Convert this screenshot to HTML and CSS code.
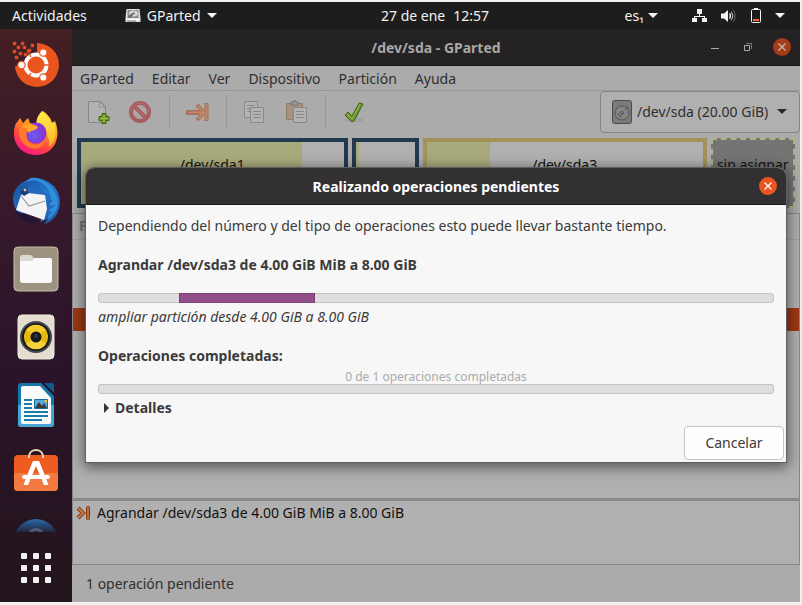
FILE: index.html
```html
<!DOCTYPE html>
<html lang="es">
<head>
<meta charset="utf-8">
<title>GParted</title>
<link rel="stylesheet" href="styles.css">
</head>
<body>
<header class="topbar">
  <div class="topbar-side">
    <button class="top-item">Actividades</button>
    <button class="top-item app-menu">
      <svg width="16" height="16" viewBox="0 0 16 16"><path d="M1.500 1h13l1 9v4h-15v-4z" fill="#e2e2e2"/><path d="M2.500 2h11v8h-11z" fill="#8c8c8c"/><ellipse cx="8.500" cy="5.500" rx="4.500" ry="3" fill="#d4d4d4"/><path d="M3 9l4-4 2 1-4 4z" fill="#666"/><circle cx="9" cy="5.300" r="1" fill="#777"/><path d="M1 11h14v1H1z" fill="#fff"/><path d="M2 12.500h9v1H2z" fill="#777"/></svg>
      GParted
      <svg width="10" height="6" viewBox="0 0 10 6"><path d="M0 0h10L5 5z" fill="#f2f2f2"/></svg>
    </button>
  </div>
  <button class="top-item clock"><span>27 de ene</span><span>12:57</span></button>
  <div class="topbar-side status-area">
    <button class="top-item lang"><span>es₁</span>
      <svg width="10" height="6" viewBox="0 0 10 6"><path d="M0 0h10L5 5z" fill="#f2f2f2"/></svg>
    </button>
    <button class="top-item system" aria-label="Sistema">
      <svg width="15" height="14" viewBox="0 0 15 14"><path d="M5 0h5v5H8v2h5v2h2v4h-5V9h2V8H3v1h2v4H0V9h2V7h5V5H5z" fill="#f2f2f2"/></svg>
      <svg width="16" height="14" viewBox="0 0 16 14"><path d="M0 4.500h3L7 1v12L3 9.500H0z" fill="#f2f2f2"/><path d="M8.500 4.500q2 2.500 0 5" fill="none" stroke="#f2f2f2" stroke-width="1.300"/><path d="M10 2.800q3.500 4.200 0 8.400" fill="none" stroke="#aaa" stroke-width="1.200"/><path d="M12 1q4.500 6 0 12" fill="none" stroke="#555" stroke-width="1.200"/></svg>
      <svg width="10" height="16" viewBox="0 0 10 16"><path d="M3 0h4v1H3z" fill="#f2f2f2"/><rect x=".5" y="1.500" width="9" height="13" rx="1" fill="none" stroke="#f2f2f2"/><path d="M2 11h6v2H2z" fill="#ef6b33"/></svg>
      <svg width="10" height="6" viewBox="0 0 10 6"><path d="M0 0h10L5 5z" fill="#f2f2f2"/></svg>
    </button>
  </div>
</header>

<div class="desktop">
  <nav class="dock" aria-label="Aplicaciones">
    <div class="dock-apps">
      <button aria-label="Instalar Ubuntu"><svg viewBox="0 0 48 48"><path d="M25 2a22 22 0 1 1-22 23h5v-4h5v-4h6v-5h6z" fill="#e9541f"/><g fill="#e9541f" stroke="#b8421d" stroke-width=".6"><path d="M1 1h3v3H1zM9 1h3v3H9zM5 5h3v3H5zM11 5h3v3h-3zM19 3h3v3h-3zM1 9h3v3H1zM7 11h3v3H7zM12 12h3v3h-3zM3 15h3v3H3zM16 8h3v3h-3z"/></g><circle cx="24" cy="24" r="10.500" fill="none" stroke="#fff" stroke-width="4"/><path d="M19 16l-4-7M19 32l-4 7M32 24h7" stroke="#e9541f" stroke-width="1.500"/><g stroke="#e9541f" stroke-width="1.200" fill="#fff"><circle cx="9.500" cy="24" r="3.700"/><circle cx="31.300" cy="11.500" r="3.700"/><circle cx="31.300" cy="36.500" r="3.700"/></g></svg></button>
      <button aria-label="Firefox"><svg viewBox="0 0 48 48"><defs><linearGradient id="fx" x1=".8" y1="0" x2=".3" y2="1"><stop offset="0" stop-color="#ffe02e"/><stop offset=".4" stop-color="#ff9a22"/><stop offset=".7" stop-color="#ff4540"/><stop offset="1" stop-color="#f5148c"/></linearGradient><radialGradient id="fp" cx=".4" cy=".6"><stop offset="0" stop-color="#6a5cf0"/><stop offset="1" stop-color="#8a35d8"/></radialGradient><linearGradient id="fy" x1="0" y1="0" x2="0" y2="1"><stop offset="0" stop-color="#fff04e"/><stop offset="1" stop-color="#ffae24"/></linearGradient></defs><path d="M6 12l2-3 3 5 5-5 2 5 8 1c1-6 3-9 5-13 5 4 8 7 9 12l3-2c6 15 1 33-18 34C6 46-1 30 3 17c0-2 2-4 3-5z" fill="url(#fx)"/><path d="M24 15c1-6 2-9 6-13 5 4 8 8 9 13l2-2c5 10 2 20-4 25 1-8-2-16-8-20z" fill="url(#fy)"/><circle cx="24" cy="24" r="10.500" fill="url(#fp)"/><path d="M9 18c6-5 14-3 17 0-2 4-7 3-9 6-2-3-5-5-8-6z" fill="#ffa72a"/><path d="M7 20c2-2 6-2 8 0 0 5-2 9 2 13 5 4 12 3 16-2-2 8-8 10-14 8C10 36 6 29 7 20z" fill="#ff7a2c"/></svg></button>
      <button aria-label="Thunderbird"><svg viewBox="0 0 48 48"><defs><linearGradient id="tb" x1="0" y1="0" x2="1" y2="1"><stop offset="0" stop-color="#174b98"/><stop offset=".5" stop-color="#2476c8"/><stop offset="1" stop-color="#2058a5"/></linearGradient></defs><path d="M17 1C33-1 48 9 48 25c0 11-7 20-16 22l4-5-8 3 3-7L7 36C-2 28-1 12 11 5c3-1 5-3 10-3z" fill="url(#tb)"/><path d="M12 6c12-7 26 1 27 16l-3 20c8-4 12-14 9-22C41 8 27-3 17 2z" fill="#2e8fda"/><path d="M12 17c4-9 13-9 19-3 3 2 3 7 3 10l7-1-5 6 8-1-8 6 5 1-11 8-7-24z" fill="#236abc"/><path d="M4 33l5-15 7-2 17 2 2 14-3 11z" fill="#f4f4f7"/><path d="M9 19l8 10 16-5" fill="none" stroke="#999" stroke-width="1.200"/><path d="M8 15l6-5 3 6-5 3z" fill="#1b3f7e"/><circle cx="13" cy="13" r="1.400" fill="#e9b58a"/><path d="M4 34l24 10c-9 4-21 0-24-10z" fill="#241438"/></svg></button>
      <button aria-label="Archivos"><svg viewBox="0 0 48 48"><rect x="2" y="2" width="44" height="44" rx="4" fill="#9c9480" stroke="#c4bda9"/><path d="M8 12q0-2 2-2h9l3 3h16q2 0 2 2v5H8z" fill="#ddd9ce"/><path d="M8 16h12l3-3h15q2 0 2 2v20q0 3-3 3H11q-3 0-3-3z" fill="#fafafa"/></svg></button>
      <button aria-label="Rhythmbox"><svg viewBox="0 0 48 48"><rect x="6" y="2" width="36" height="44" rx="4" fill="#e3decf" stroke="#f2eee3"/><circle cx="24" cy="24" r="16" fill="#444a4d"/><circle cx="24" cy="24" r="14" fill="#17191a"/><circle cx="24" cy="24" r="12" fill="#e5b810"/><path d="M24 24L14 31a12 12 0 0 0 20 0z" fill="#f5d13c"/><path d="M24 24L14 17a12 12 0 0 1 20 0z" fill="#f2cb2c"/><circle cx="24" cy="24" r="5.500" fill="#17191a"/><circle cx="24" cy="23" r="2" fill="#36393a"/></svg></button>
      <button aria-label="LibreOffice Writer"><svg viewBox="0 0 48 48"><path d="M9 2h20l13 13v28q0 3-3 3H9q-3 0-3-3V5q0-3 3-3z" fill="#1577a8"/><path d="M6 24h36v19q0 3-3 3H9q-3 0-3-3z" fill="#49a5d3"/><path d="M32 2h8q2 0 2 2v8z" fill="#0d5b88"/><path d="M11 5h17l11 12v24q0 2-2 2H11q-2 0-2-2V7q0-2 2-2z" fill="#fafafa"/><path d="M12 18h8v2h-8zM12 22h8v2h-8zM12 26h8v2h-8zM12 30h24v2H12zM12 34h24v2H12zM12 38h18v2H12z" fill="#1b7dae"/><path d="M22.500 18.500h13v9h-13z" fill="#55a9d6" stroke="#1b6d9b"/><path d="M23 27l4-6 3 4 2-3 3 5z" fill="#3b3b3b"/><path d="M32 19h3v3z" fill="#f5ca35"/></svg></button>
      <button aria-label="Software de Ubuntu"><svg viewBox="0 0 48 48"><rect x="2" y="6" width="44" height="36" rx="4" fill="#ee5c22"/><path d="M2 24h44v14q0 4-4 4H6q-4 0-4-4z" fill="#f2793f"/><path d="M17 9V7c1-8 13-8 14 0v2" fill="none" stroke="#ead9ae" stroke-width="2"/><path d="M21 12h6l3 7 6.500 17H32l-8-19-8 19h-4.500L18 19z" fill="#fff"/><rect x="10" y="26" width="28" height="4" rx="2" fill="#fff"/></svg></button>
      <button aria-label="Ayuda"><svg viewBox="0 0 48 48"><defs><linearGradient id="hp" x1="0" y1="0" x2="0" y2="1"><stop offset="0" stop-color="#2e68aa"/><stop offset=".3" stop-color="#20263f"/></linearGradient></defs><circle cx="24" cy="24" r="22" fill="url(#hp)"/><path d="M18 15q6-5 12 0" fill="none" stroke="#565a73" stroke-width="3"/></svg></button>
    </div>
    <button class="show-apps" aria-label="Mostrar aplicaciones"><svg width="30" height="30" viewBox="0 0 30 30" fill="#f1f1f1"><rect width="6" height="6" rx="1"/><rect x="12" width="6" height="6" rx="1"/><rect x="24" width="6" height="6" rx="1"/><rect y="12" width="6" height="6" rx="1"/><rect x="12" y="12" width="6" height="6" rx="1"/><rect x="24" y="12" width="6" height="6" rx="1"/><rect y="24" width="6" height="6" rx="1"/><rect x="12" y="24" width="6" height="6" rx="1"/><rect x="24" y="24" width="6" height="6" rx="1"/></svg></button>
  </nav>

  <main class="window">
    <div class="titlebar">
      <h1>/dev/sda - GParted</h1>
      <div class="window-controls">
        <button aria-label="Minimizar"><svg width="8" height="8" viewBox="0 0 8 8"><path d="M0 5h8v1H0z" fill="#aaa"/></svg></button>
        <button aria-label="Restaurar"><svg width="8" height="8" viewBox="0 0 8 8"><path d="M.5 2.500h5v5h-5z" fill="none" stroke="#aaa"/><path d="M2 .5h5.500V6" fill="none" stroke="#777"/></svg></button>
        <button class="close" aria-label="Cerrar"><svg width="8" height="8" viewBox="0 0 8 8"><path d="M.5.5l7 7m0-7l-7 7" stroke="#bbb" stroke-width="1.300"/></svg></button>
      </div>
    </div>
    <nav class="menubar">
      <button>GParted</button><button>Editar</button><button>Ver</button><button>Dispositivo</button><button>Partición</button><button>Ayuda</button>
    </nav>
    <div class="toolbar">
      <button aria-label="Nueva"><svg viewBox="0 0 24 24"><path d="M1.500 1.500h12l5 5v16h-17z" fill="#b2b2b2" stroke="#868686"/><path d="M13 2l-1 5q4-1 6 1z" fill="#c2c2c2" stroke="#8c8c8c"/><path d="M15 13.500h4v3h3v4h-3v3h-4v-3h-3v-4h3z" fill="#7d9c2c" stroke="#3e6108"/><path d="M17 15v7M13.500 18.500h7" stroke="#9cb74a"/></svg></button>
      <button aria-label="Eliminar"><svg viewBox="0 0 24 24"><circle cx="11" cy="12" r="9" fill="#aaa7a7" stroke="#a75c5f" stroke-width="4"/><path d="M5 6l12 12" stroke="#a75c5f" stroke-width="4"/><path d="M6 7l11 11M2 12a9 9 0 0 1 18 0" stroke="#b57073" fill="none"/></svg></button>
      <i class="separator"></i>
      <button aria-label="Redimensionar"><svg viewBox="0 0 24 24"><path d="M2 12.500h13" stroke="#a96f58" stroke-width="5" stroke-linecap="round"/><path d="M11 5l7 7.500-7 7.500" fill="none" stroke="#a96f58" stroke-width="4"/><path d="M20.500 3v18" stroke="#a96f58" stroke-width="4"/><path d="M2 12.500h15M12 6l6 6.500-6 6.500M20.500 4v16" fill="none" stroke="#bd8a6c" stroke-width="2"/></svg></button>
      <i class="separator"></i>
      <button aria-label="Copiar"><svg viewBox="0 0 24 24" fill="#b3b3b3" stroke="#888"><path d="M1.500 1.500h13v16h-13z"/><path d="M4 5.500h8M4 8.500h8M4 11.500h8"/><path d="M7.500 7.500h13v15h-13z"/><path d="M10 11.500h8M10 14.500h8M10 17.500h8"/></svg></button>
      <button aria-label="Pegar"><svg viewBox="0 0 24 24"><path d="M1.500 3.500h16v16h-16z" fill="#a59280" stroke="#8e7e70"/><path d="M6 5V2h2V1h3v1h2v3z" fill="#999" stroke="#777"/><g fill="#b3b3b3" stroke="#888"><path d="M8.500 7.500h13v15h-13z"/><path d="M11 11.500h8M11 14.500h8M11 17.500h8"/></g></svg></button>
      <i class="separator"></i>
      <button aria-label="Aplicar"><svg viewBox="0 0 24 24"><ellipse cx="12" cy="20" rx="10" ry="2" fill="#a0a0a0"/><path d="M3 15l3-3 4 4L17 3l4 1-9 17-2 1z" fill="#6d962f" stroke="#42650e"/><path d="M5 14l5 5 8-15" fill="none" stroke="#94b555"/></svg></button>
      <label class="device">
        <svg width="20" height="24" viewBox="0 0 20 24"><rect x=".5" y=".5" width="19" height="23" rx="2" fill="#7b7b7b" stroke="#4b4b4b"/><circle cx="10" cy="13" r="7" fill="#858585" stroke="#555"/><circle cx="10" cy="13" r="1.500" fill="none" stroke="#505050"/><path d="M6 13a4 4 0 0 0 4 4M13 10l3-3" fill="none" stroke="#555"/></svg>
        <select aria-label="Dispositivo"><option>/dev/sda (20.00 GiB)</option></select>
        <svg width="10" height="6" viewBox="0 0 10 6"><path d="M0 0h10L5 5z" fill="#2b2b2b"/></svg>
      </label>
    </div>
    <div class="disk">
      <div class="part part-1"><span class="used"></span><b>/dev/sda1</b></div>
      <div class="part part-2"><span class="used"></span></div>
      <div class="part part-3"><span class="used"></span><b>/dev/sda3</b></div>
      <div class="part part-free"><b>sin asignar</b></div>
    </div>
    <div class="partitions">
      <table>
        <thead><tr><th>P</th></tr></thead>
        <tbody><tr><td></td></tr><tr><td></td></tr><tr><td></td></tr><tr class="selected"><td></td></tr></tbody>
      </table>
    </div>
    <div class="operations">
      <svg width="16" height="16" viewBox="0 0 16 16"><path d="M2 3l5 5-5 5" fill="none" stroke="#8b3d18" stroke-width="4"/><path d="M2 3l5 5-5 5" fill="none" stroke="#c07a4e" stroke-width="2"/><rect x="10.500" y="1.500" width="3" height="13" rx="1" fill="#bd7143" stroke="#8b3213"/></svg>
      <span>Agrandar /dev/sda3 de 4.00 GiB MiB a 8.00 GiB</span>
    </div>
    <footer class="statusbar">1 operación pendiente</footer>

    <div class="overlay">
      <section class="dialog" role="dialog" aria-labelledby="dialog-title">
        <header>
          <h2 id="dialog-title">Realizando operaciones pendientes</h2>
          <button class="close" aria-label="Cerrar"><svg width="8" height="8" viewBox="0 0 8 8"><path d="M.5.5l7 7m0-7l-7 7" stroke="#fff" stroke-width="1.300"/></svg></button>
        </header>
        <div class="dialog-body">
          <p class="intro">Dependiendo del número y del tipo de operaciones esto puede llevar bastante tiempo.</p>
          <h3>Agrandar /dev/sda3 de 4.00 GiB MiB a 8.00 GiB</h3>
          <div class="track pulse" role="progressbar" aria-label="Operación actual"><span></span></div>
          <p class="step">ampliar partición desde 4.00 GiB a 8.00 GiB</p>
          <h3>Operaciones completadas:</h3>
          <p class="count">0 de 1 operaciones completadas</p>
          <div class="track" role="progressbar" aria-label="Operaciones completadas" aria-valuenow="0" aria-valuemax="1"></div>
          <details><summary><svg width="6" height="10" viewBox="0 0 6 10"><path d="M0 0v10l5-5z" fill="#333"/></svg>Detalles</summary></details>
        </div>
        <div class="actions"><button>Cancelar</button></div>
      </section>
    </div>
  </main>
</div>
</body>
</html>
```

FILE: styles.css
```css
* { box-sizing: border-box; }

body {
  margin: 0;
  padding: 2px 2px 3px 0;
  height: 100vh;
  display: flex;
  flex-direction: column;
  background: #f0f0f0;
  color: #2f2f2f;
  font: 14px/20px "Noto Sans", "Open Sans", sans-serif;
}

h1, h2, h3, p { margin: 0; font-size: 14px; line-height: 20px; }

button, select {
  margin: 0;
  padding: 0;
  border: 0;
  background: none;
  color: inherit;
  font: inherit;
}

svg { display: block; flex: none; }

/* Top panel */
.topbar {
  height: 27px;
  display: flex;
  align-items: center;
  background: #1d1d1d;
  color: #f2f2f2;
}
.topbar-side { flex: 1; display: flex; align-items: center; padding: 0 15px 0 12px; gap: 38px; }
.top-item { display: flex; align-items: center; gap: 6px; white-space: nowrap; }
.clock { gap: 8px; padding-left: 70px; }
.status-area { justify-content: flex-end; gap: 34px; }
.lang { gap: 4px; }
.system { gap: 14px; }

.desktop { flex: 1; min-height: 0; display: flex; }

/* Dock */
.dock {
  width: 72px;
  flex: none;
  display: flex;
  flex-direction: column;
  background: linear-gradient(#441f24, #35182b 35%, #2b142a 60%, #23151c);
}
.dock-apps {
  flex: 1;
  min-height: 0;
  overflow: hidden;
  display: flex;
  flex-direction: column;
  align-items: center;
  gap: 20px;
  padding-top: 12px;
}
.dock-apps button { flex: none; width: 48px; height: 48px; }
.show-apps { height: 70px; padding-top: 2px; display: flex; align-items: center; justify-content: center; }

/* Main window */
.window {
  position: relative;
  flex: 1;
  min-width: 0;
  display: flex;
  flex-direction: column;
  background: #ababab;
}
.titlebar {
  height: 37px;
  display: grid;
  grid-template-columns: 1fr auto 1fr;
  align-items: center;
  background: #242223;
  border-bottom: 1px solid #151515;
  color: #a9a7a5;
}
.titlebar h1 { grid-column: 2; padding-top: 2px; }
.window-controls { display: flex; justify-content: flex-end; align-items: center; gap: 25px; padding-right: 9px; }
.close {
  width: 18px;
  height: 18px;
  border-radius: 50%;
  display: flex;
  align-items: center;
  justify-content: center;
  background: #e95420;
}
.window-controls .close { background: #a63b17; margin-left: -4px; }

.menubar { height: 25px; display: flex; align-items: center; gap: 18px; padding: 2px 8px 0; border-bottom: 1px solid #989898; }

.toolbar { height: 42px; display: flex; align-items: center; padding-left: 6px; }
.toolbar > button { width: 42px; height: 42px; padding: 9px; }
.toolbar > button svg { width: 24px; height: 24px; }
.separator { width: 1px; height: 34px; margin: 0 7px; background: #989898; }
.device {
  margin-left: auto;
  height: 42px;
  display: flex;
  align-items: center;
  gap: 5px;
  padding: 0 12px 0 11px;
  border: 1px solid #858585;
  border-radius: 4px;
  background: #b0b0b0;
}
.device select { appearance: none; width: 135px; }

.disk { display: grid; grid-template-columns: 269fr 67fr 282fr 84fr; gap: 4px; padding: 5px; height: 80px; }
.part { position: relative; display: flex; background: #b0b0b0; border: 4px solid #22394f; color: #111; }
.part b { position: absolute; inset: 13px 0 auto; text-align: center; font-weight: 400; line-height: 20px; white-space: nowrap; }
.used { background: #a9aa7c; }
.part-1 .used { width: 84%; }
.part-2 .used { width: 3px; }
.part-3 { border-color: #a39259; }
.part-3 .used { width: 23%; }
.part-free { border: 2px dashed #b0b184; background: #747474; }
.part-free b { top: 15px; }

.partitions { flex: 1; min-height: 0; border: 1px solid #888; border-bottom: 3px solid #888; background: #b0b0b0; }
table { width: 100%; border-collapse: collapse; }
th { height: 25px; padding: 0 6px; text-align: left; color: #757575; background: #adadad; border-bottom: 1px solid #a0a0a0; }
td { height: 23px; padding: 0; }
.selected { background: #9d3816; }

.operations {
  height: 64px;
  display: flex;
  align-items: flex-start;
  gap: 5px;
  padding: 2px 3px;
  background: #b0b0b0;
  border: 1px solid #888;
  border-top: 0;
  color: #111;
}
.operations svg { margin-top: 2px; }
.statusbar { height: 37px; padding: 9px 14px; }

/* Progress dialog */
.overlay { position: absolute; inset: 0; padding: 139px 14px 0; }
.dialog {
  background: #f7f7f7;
  color: #3b3b3b;
  border-radius: 8px 8px 0 0;
  box-shadow: 0 0 0 1px #5e5e5e, 0 3px 14px 2px #0008;
}
.dialog > header {
  height: 37px;
  display: grid;
  grid-template-columns: 1fr auto 1fr;
  align-items: center;
  padding: 0 9px;
  border-radius: 8px 8px 0 0;
  border-bottom: 1px solid #1c1b1b;
  background: #323031;
  color: #fff;
}
.dialog h2 { grid-column: 2; padding-top: 2px; }
.dialog .close { justify-self: end; }
.dialog-body { padding: 11px 12px 0; }
.dialog-body h3 { margin-top: 19px; }
.track { height: 10px; border: 1px solid #c3c3c3; border-radius: 3px; background: #dedede; }
.pulse { margin: 18px 0 4px; display: flex; }
.pulse span { width: 136px; margin: -1px 0 -1px 80px; background: #924d8b; border: 1px solid #7d3f77; }
.step { font-style: italic; }
.count { margin-top: 3px; text-align: center; color: #aaa; font-size: 12px; line-height: 15px; }
summary { display: flex; align-items: center; gap: 5px; margin-top: 4px; padding-left: 6px; font-weight: 700; list-style: none; }
.actions { display: flex; justify-content: flex-end; padding: 8px 2px 2px; }
.actions button { height: 34px; width: 100px; border: 1px solid #c5c5c5; border-radius: 4px; background: #fdfdfd; }
```
